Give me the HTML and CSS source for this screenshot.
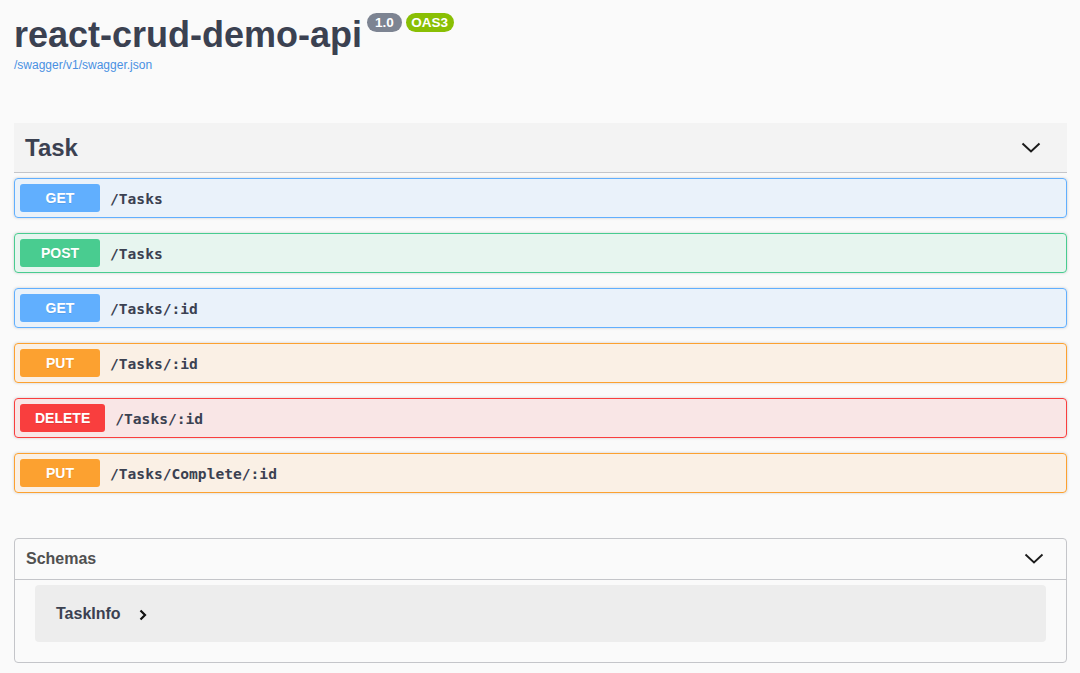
FILE: index.html
```html
<!DOCTYPE html>
<html lang="en">
<head>
<meta charset="utf-8">
<title>react-crud-demo-api</title>
<link rel="stylesheet" href="styles.css">
</head>
<body>
<div class="wrapper">
  <header class="info">
    <h2 class="title">
      <span class="title-text">react-crud-demo-api</span>
      <span class="badge badge-version">1.0</span>
      <span class="badge badge-oas">OAS3</span>
    </h2>
    <a class="spec-link" href="#">/swagger/v1/swagger.json</a>
  </header>

  <section class="tag-section">
    <div class="tag-header">
      <h3 class="tag-name">Task</h3>
      <svg class="chevron-down" width="20" height="20" viewBox="0 0 20 20"><path d="M1.5 5.5 L10 13.5 L18.5 5.5" fill="none" stroke="#1b1b1b" stroke-width="2"/></svg>
    </div>

    <div class="opblock op-get">
      <span class="method">GET</span>
      <span class="path">/Tasks</span>
    </div>
    <div class="opblock op-post">
      <span class="method">POST</span>
      <span class="path">/Tasks</span>
    </div>
    <div class="opblock op-get">
      <span class="method">GET</span>
      <span class="path">/Tasks/:id</span>
    </div>
    <div class="opblock op-put">
      <span class="method">PUT</span>
      <span class="path">/Tasks/:id</span>
    </div>
    <div class="opblock op-delete">
      <span class="method">DELETE</span>
      <span class="path">/Tasks/:id</span>
    </div>
    <div class="opblock op-put">
      <span class="method">PUT</span>
      <span class="path">/Tasks/Complete/:id</span>
    </div>
  </section>

  <section class="models">
    <div class="models-header">
      <h4 class="models-title">Schemas</h4>
      <svg class="chevron-down small" width="20" height="20" viewBox="0 0 20 20"><path d="M1.5 5.5 L10 13.5 L18.5 5.5" fill="none" stroke="#1b1b1b" stroke-width="1.8"/></svg>
    </div>
    <div class="model-container">
      <span class="model-title">TaskInfo</span>
      <svg class="chevron-right" width="8" height="12" viewBox="0 0 8 12"><path d="M1.5 1.5 L6 6 L1.5 10.5" fill="none" stroke="#111" stroke-width="2.2"/></svg>
    </div>
  </section>
</div>
</body>
</html>
```

FILE: styles.css
```css
* { box-sizing: border-box; }

html, body {
  margin: 0;
  padding: 0;
  background: #fafafa;
  font-family: "Liberation Sans", Arial, sans-serif;
  color: #3b4151;
}

.wrapper {
  width: 1053px;
  margin-left: 14px;
}

.info {
  padding-top: 13px;
  display: flex;
  flex-direction: column;
  align-items: flex-start;
}

.title {
  margin: 0;
  display: flex;
  align-items: flex-start;
  font-size: 36px;
  font-weight: 700;
  line-height: 43px;
  color: #3b4151;
}

.title-text { margin-right: 5px; }

.badge {
  font-size: 13.5px;
  font-weight: 700;
  line-height: 15px;
  padding: 2px 5.5px;
  border-radius: 57px;
  color: #fff;
  margin-right: 4px;
}

.badge-version {
  background: #7d8492;
  padding: 2px 8px;
}

.badge-oas { background: #89bf04; }

.spec-link {
  font-size: 12px;
  line-height: 16px;
  margin-top: 1px;
  color: #4990e2;
  text-decoration: none;
}

.tag-section {
  margin-top: 50px;
}

.tag-header {
  display: flex;
  align-items: center;
  justify-content: space-between;
  height: 50px;
  padding: 0 26px 0 11px;
  background: #f3f3f3;
  border-bottom: 1px solid #c4c5c9;
  margin-bottom: 5px;
}

.tag-name {
  margin: 0;
  font-size: 24px;
  font-weight: 700;
  line-height: 30px;
  color: #3b4151;
}

.chevron-down { display: block; }

.opblock {
  display: flex;
  align-items: center;
  height: 40px;
  padding: 0 5px;
  margin-bottom: 15px;
  border: 1px solid;
  border-radius: 4px;
  box-shadow: 0 0 3px rgba(0, 0, 0, 0.19);
}

.method {
  min-width: 80px;
  height: 28px;
  padding: 0 15px;
  display: flex;
  align-items: center;
  justify-content: center;
  border-radius: 3px;
  font-size: 14px;
  font-weight: 700;
  color: #fff;
  text-shadow: 0 1px 0 rgba(0, 0, 0, 0.1);
}

.path {
  padding: 0 10px;
  font-family: "DejaVu Sans Mono", "Liberation Mono", monospace;
  font-size: 14.6px;
  font-weight: 700;
  color: #3b4151;
}

.op-get { background: rgba(97, 175, 254, 0.1); border-color: #61affe; }
.op-get .method { background: #61affe; }
.op-post { background: rgba(73, 204, 144, 0.1); border-color: #49cc90; }
.op-post .method { background: #49cc90; }
.op-put { background: rgba(252, 161, 48, 0.1); border-color: #fca130; }
.op-put .method { background: #fca130; }
.op-delete { background: rgba(249, 62, 62, 0.1); border-color: #f93e3e; }
.op-delete .method { background: #f93e3e; }

.models {
  margin-top: 45px;
  border: 1px solid #c4c5c9;
  border-radius: 4px;
  padding-bottom: 20px;
}

.models-header {
  display: flex;
  align-items: center;
  justify-content: space-between;
  height: 41px;
  padding: 0 22px 0 11px;
  border-bottom: 1px solid #c4c5c9;
  margin-bottom: 5px;
}

.models-title {
  margin: 0;
  font-size: 16px;
  font-weight: 700;
  color: #505050;
}

.model-container {
  margin: 0 20px;
  height: 57px;
  padding: 0 21px;
  display: flex;
  align-items: center;
  background: rgba(0, 0, 0, 0.05);
  border-radius: 4px;
}

.model-title {
  font-size: 16px;
  font-weight: 700;
  color: #3b4151;
}

.chevron-right {
  margin-left: 18px;
  margin-top: 2px;
  display: block;
}
```
